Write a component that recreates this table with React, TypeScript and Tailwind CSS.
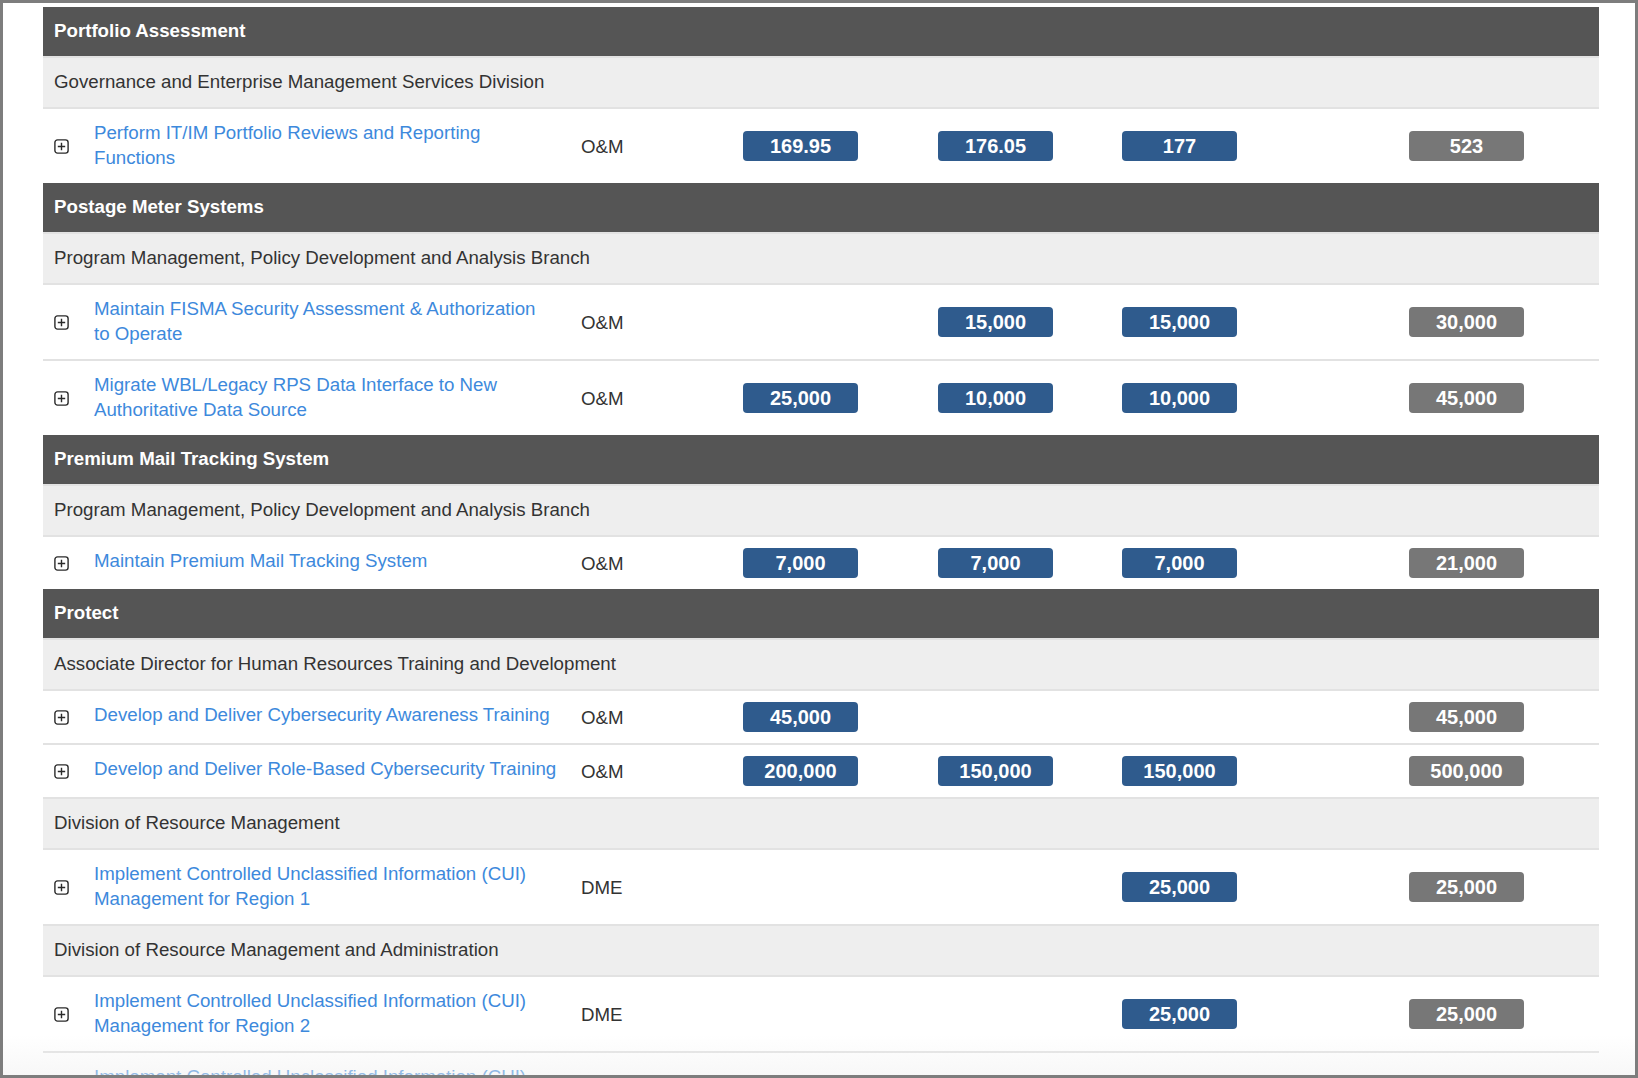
import { Fragment } from 'react';

type Item = {
  name: string;
  type: string;
  values: string[];
  total: string;
};

type Group = { division: string; items: Item[] };
type Section = { title: string; groups: Group[] };

const sections: Section[] = [
  {
    title: 'Portfolio Assessment',
    groups: [
      {
        division: 'Governance and Enterprise Management Services Division',
        items: [
          {
            name: 'Perform IT/IM Portfolio Reviews and Reporting Functions',
            type: 'O&M',
            values: ['169.95', '176.05', '177'],
            total: '523',
          },
        ],
      },
    ],
  },
  {
    title: 'Postage Meter Systems',
    groups: [
      {
        division: 'Program Management, Policy Development and Analysis Branch',
        items: [
          {
            name: 'Maintain FISMA Security Assessment & Authorization to\u00a0Operate',
            type: 'O&M',
            values: ['', '15,000', '15,000'],
            total: '30,000',
          },
          {
            name: 'Migrate WBL/Legacy RPS Data Interface to New Authoritative Data Source',
            type: 'O&M',
            values: ['25,000', '10,000', '10,000'],
            total: '45,000',
          },
        ],
      },
    ],
  },
  {
    title: 'Premium Mail Tracking System',
    groups: [
      {
        division: 'Program Management, Policy Development and Analysis Branch',
        items: [
          {
            name: 'Maintain Premium Mail Tracking System',
            type: 'O&M',
            values: ['7,000', '7,000', '7,000'],
            total: '21,000',
          },
        ],
      },
    ],
  },
  {
    title: 'Protect',
    groups: [
      {
        division: 'Associate Director for Human Resources Training and Development',
        items: [
          {
            name: 'Develop and Deliver Cybersecurity Awareness Training',
            type: 'O&M',
            values: ['45,000', '', ''],
            total: '45,000',
          },
          {
            name: 'Develop and Deliver Role-Based Cybersecurity Training',
            type: 'O&M',
            values: ['200,000', '150,000', '150,000'],
            total: '500,000',
          },
        ],
      },
      {
        division: 'Division of Resource Management',
        items: [
          {
            name: 'Implement Controlled Unclassified Information (CUI) Management for Region 1',
            type: 'DME',
            values: ['', '', '25,000'],
            total: '25,000',
          },
        ],
      },
      {
        division: 'Division of Resource Management and Administration',
        items: [
          {
            name: 'Implement Controlled Unclassified Information (CUI) Management for Region 2',
            type: 'DME',
            values: ['', '', '25,000'],
            total: '25,000',
          },
          {
            name: 'Implement Controlled Unclassified Information (CUI) Management for Region 3',
            type: 'DME',
            values: ['', '', '25,000'],
            total: '25,000',
          },
        ],
      },
    ],
  },
];

const cols = 'grid grid-cols-[41px_487px_162px_195px_184px_287px_1fr]';

function ExpandIcon() {
  return (
    <svg width="15" height="15" viewBox="0 0 15 15" fill="none" stroke="#2b2b2b" strokeWidth="1.4">
      <rect x="0.9" y="0.9" width="13.2" height="13.2" rx="2.6" />
      <path d="M7.5 3.8v7.4M3.8 7.5h7.4" />
    </svg>
  );
}

function Amount({ value, gray }: { value: string; gray?: boolean }) {
  if (!value) return null;
  return (
    <span
      className={`inline-flex h-[30px] w-[115px] items-center justify-center rounded-[4px] text-[20px] font-bold text-white ${
        gray ? 'bg-[#777777]' : 'bg-[#2f5b8d]'
      }`}
    >
      {value}
    </span>
  );
}

function ItemRow({ item }: { item: Item }) {
  return (
    <div className={`${cols} min-h-[54px] border-t-2 border-[#e2e2e2] bg-white`}>
      <div className="flex items-center pl-[11px]">
        <ExpandIcon />
      </div>
      <div className="pb-[13px] pl-[10px] pr-[10px] pt-[11px] text-[#3d89dc]">{item.name}</div>
      <div className="flex items-center pl-[10px] text-[#333]">{item.type}</div>
      {item.values.map((v, i) => (
        <div key={i} className="flex items-center pl-[10px]">
          <Amount value={v} />
        </div>
      ))}
      <div className="flex items-center pl-[10px]">
        <Amount value={item.total} gray />
      </div>
    </div>
  );
}

export default function App() {
  return (
    <div className="relative h-[1078px] w-[1638px] overflow-hidden border-[3px] border-[#7d7d7d] bg-white pl-[40px] pr-[36px] pt-[4px] font-['Liberation_Sans',Arial,sans-serif] text-[18.7px] leading-[25px] text-[#333]">
      <div>
        {sections.map((s) => (
          <Fragment key={s.title}>
            <div className="bg-[#555555] px-[11px] pb-[13px] pt-[11px] font-bold text-white">{s.title}</div>
            {s.groups.map((g) => (
              <Fragment key={g.division}>
                <div className="border-t-2 border-[#e2e2e2] bg-[#eeeeee] px-[11px] pb-[13px] pt-[11px]">
                  {g.division}
                </div>
                {g.items.map((it) => (
                  <ItemRow key={it.name} item={it} />
                ))}
              </Fragment>
            ))}
          </Fragment>
        ))}
      </div>
      <div className="pointer-events-none absolute inset-x-0 bottom-0 h-[40px] bg-gradient-to-b from-white/0 to-[#f0f0f0]/50" />
    </div>
  );
}
